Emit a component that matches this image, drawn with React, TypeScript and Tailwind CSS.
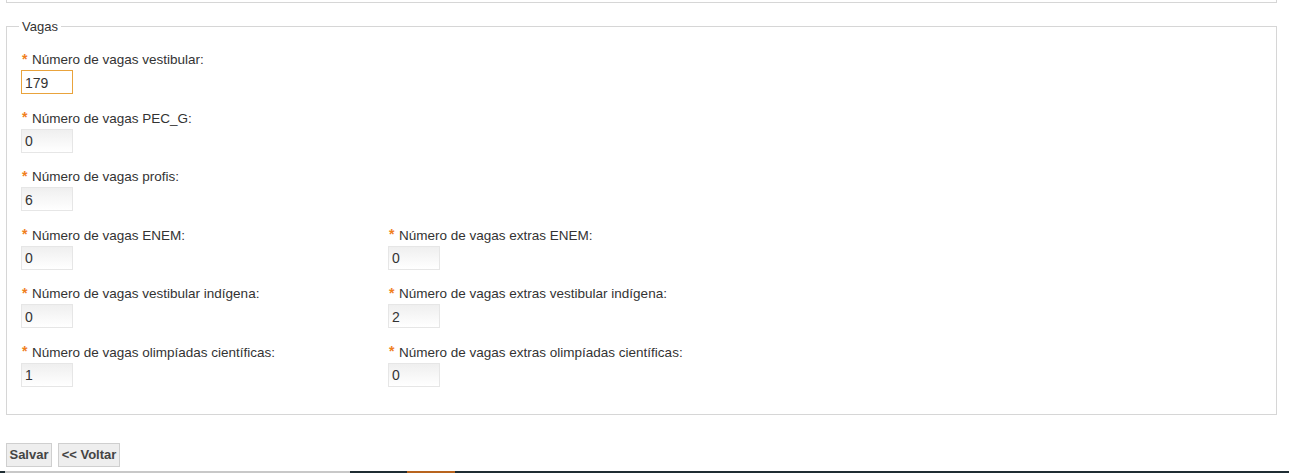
import React from 'react';

type Field = { label: string; value: string; focused?: boolean };

const rows: Field[][] = [
  [{ label: 'Número de vagas vestibular:', value: '179', focused: true }],
  [{ label: 'Número de vagas PEC_G:', value: '0' }],
  [{ label: 'Número de vagas profis:', value: '6' }],
  [
    { label: 'Número de vagas ENEM:', value: '0' },
    { label: 'Número de vagas extras ENEM:', value: '0' },
  ],
  [
    { label: 'Número de vagas vestibular indígena:', value: '0' },
    { label: 'Número de vagas extras vestibular indígena:', value: '2' },
  ],
  [
    { label: 'Número de vagas olimpíadas científicas:', value: '1' },
    { label: 'Número de vagas extras olimpíadas científicas:', value: '0' },
  ],
];

function NumberField({ field }: { field: Field }) {
  return (
    <div>
      <label className="flex items-center h-[15px] leading-[15px] text-[13.5px] text-[#333]">
        <span className="text-[#f07f1e] font-bold text-[14px] w-[10px] ml-[1px] -mt-[1px]">*</span>
        {field.label}
      </label>
      <input
        readOnly
        defaultValue={field.value}
        className={`mt-[3px] block w-[52px] h-[24px] px-[3px] pt-[1px] text-[14px] text-[#333] outline-none border ${
          field.focused
            ? 'border-[#e9a33c] bg-white'
            : 'border-[#e6e6e6] bg-linear-to-b from-[#efefef] to-white'
        }`}
      />
    </div>
  );
}

export default function App() {
  return (
    <div className="w-[1289px] h-[473px] bg-white overflow-hidden font-['Liberation_Sans',Arial,sans-serif] flex flex-col">
      {/* bottom edge of previous section */}
      <div className="mx-[6px] w-[1271px] h-[3px] border-x border-b border-[#d6d6d6]" />

      {/* Vagas */}
      <fieldset className="mx-[6px] mt-[16px] w-[1271px] border border-[#d6d6d6] pl-[14px] pr-4 pb-[27px]">
        <legend className="-ml-[2px] px-[3px] text-[13px] leading-[15px] text-[#333]">Vagas</legend>
        <div className="pt-[18px] flex flex-col gap-[16.5px]">
          {rows.map((row, i) => (
            <div key={i} className="grid grid-cols-[367px_1fr]">
              {row.map((f, j) => (
                <NumberField key={j} field={f} />
              ))}
            </div>
          ))}
        </div>
      </fieldset>

      {/* Actions */}
      <div className="mt-[28px] ml-[6px] flex gap-[6px]">
        <button className="h-[24px] w-[46px] border border-[#cfcfcf] bg-[#eeeeee] text-[13px] font-bold text-[#444]">
          Salvar
        </button>
        <button className="h-[24px] w-[62px] border border-[#cfcfcf] bg-[#eeeeee] text-[13px] font-bold text-[#444]">
          &lt;&lt; Voltar
        </button>
      </div>

      {/* footer strip */}
      <div className="mt-auto flex h-[2px]">
        <div className="w-[5px] bg-[#1f2d33]" />
        <div className="w-[345px] bg-[#c8c8c8]" />
        <div className="w-[57px] bg-[#1f2d33]" />
        <div className="w-[48px] bg-[#b8641e]" />
        <div className="flex-1 bg-[#1f2d33]" />
      </div>
    </div>
  );
}
